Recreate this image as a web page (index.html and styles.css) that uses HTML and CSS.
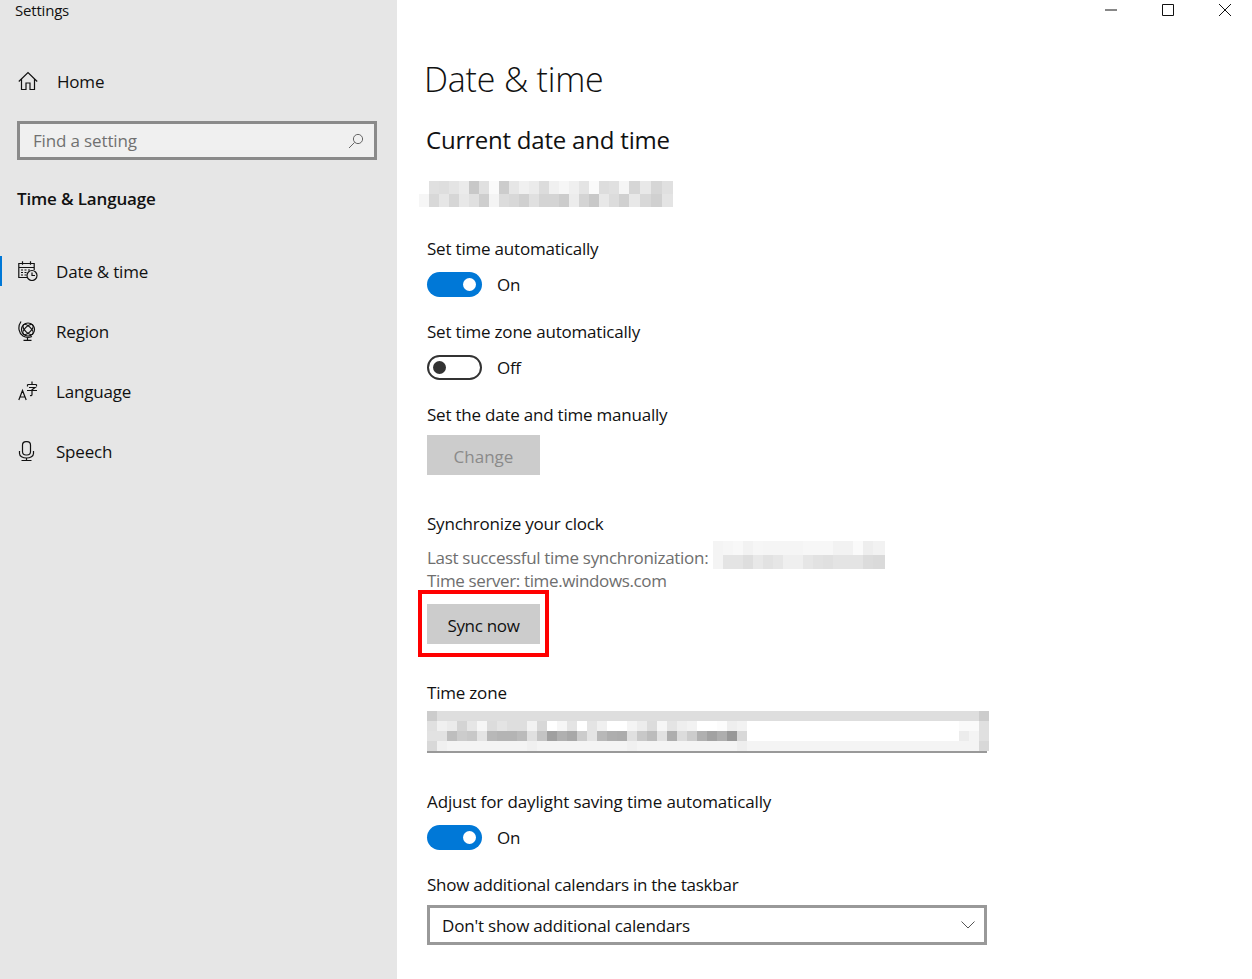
FILE: index.html
```html
<!DOCTYPE html>
<html lang="en">
<head>
<meta charset="utf-8">
<title>Settings</title>
<link rel="stylesheet" href="styles.css">
</head>
<body>
<div class="window">
  <aside class="sidebar">
    <div class="app-title">Settings</div>
    <div class="nav-row home">
      <svg class="nav-icon" viewBox="0 0 20 20"><path d="M.8 10.500 10 1.500l9.200 9M3.500 8v10.500h4.500v-6.500h4v6.500h4.500V8"/></svg>
      <span>Home</span>
    </div>
    <div class="search">
      <span>Find a setting</span>
      <svg class="search-icon" viewBox="0 0 16 16"><circle cx="10" cy="6" r="4.600"/><path d="M6.600 9.400 1 15"/></svg>
    </div>
    <div class="section-title">Time &amp; Language</div>
    <nav class="nav">
      <div class="nav-row active">
        <svg class="nav-icon" viewBox="0 0 20 20"><path d="M9 16.500H.8V2.500h15.400V9M.8 6.500h15.400M4.500.3v3.500M12.500.3v3.500"/><path d="M3 9h2M6.500 9h2M10 9h2M3 11.500h2M6.500 11.500h2M3 14h2M6.500 14h2"/><circle cx="14" cy="14.500" r="5"/><path d="M14 11.500v3h3"/></svg>
        <span>Date &amp; time</span>
      </div>
      <div class="nav-row">
        <svg class="nav-icon" viewBox="0 0 20 20"><circle cx="10" cy="8.500" r="6.500"/><ellipse cx="10" cy="8.500" rx="3" ry="6.500" transform="rotate(45 10 8.500)"/><ellipse cx="10" cy="8.500" rx="3" ry="6.500" transform="rotate(-45 10 8.500)"/><path d="M3 .5C-.8 6 1 12.500 5 15c2.500 1.500 6 1.700 9 .5M9.500 16v3M5.500 19.300h8"/></svg>
        <span>Region</span>
      </div>
      <div class="nav-row">
        <svg class="nav-icon" viewBox="0 0 20 20"><path d="M.8 19 4.500 9.500 8.200 19M2 16h5M9.500 3.500h9M9.500 3.500v2M18.500 3.500v2M14 .5v3M11 6.500h6l-3 2.200v4.800c0 1-.8 1.200-2 1M9 9.500h10"/></svg>
        <span>Language</span>
      </div>
      <div class="nav-row">
        <svg class="nav-icon" viewBox="0 0 20 20"><rect x="4.500" y=".6" width="8" height="13.400" rx="3.500"/><path d="M1.500 10v2.500a7 4.500 0 0 0 7 4.500 7 4.500 0 0 0 7-4.500V10M8.500 17v2.500M3.500 19.500h10"/></svg>
        <span>Speech</span>
      </div>
    </nav>
  </aside>

  <main class="content">
    <div class="caption-bar">
      <svg class="cap-icon" viewBox="0 0 12 12"><path d="M0 6h12"/></svg>
      <svg class="cap-icon" viewBox="0 0 12 12"><path d="M.5.500h11v11H.500z"/></svg>
      <svg class="cap-icon" viewBox="0 0 12 12"><path d="M0 0l12 12M12 0 0 12"/></svg>
    </div>
    <h1 class="page-title">Date &amp; time</h1>
    <h2 class="sub-title">Current date and time</h2>

    <svg class="mosaic date-mosaic" viewBox="0 0 254 26" shape-rendering="crispEdges">
      <g>
        <rect x="10" width="10" height="13" fill="#e0e0e0"/><rect x="20" width="10" height="13" fill="#dedede"/><rect x="30" width="10" height="13" fill="#e4e4e4"/><rect x="40" width="10" height="13" fill="#ebebeb"/><rect x="50" width="10" height="13" fill="#c8c8c8"/><rect x="60" width="10" height="13" fill="#e0e0e0"/><rect x="70" width="10" height="13" fill="#fafafa"/><rect x="80" width="10" height="13" fill="#cccccc"/><rect x="90" width="10" height="13" fill="#e6e6e6"/><rect x="100" width="10" height="13" fill="#f0f0f0"/><rect x="110" width="10" height="13" fill="#ebebeb"/><rect x="120" width="10" height="13" fill="#dcdcdc"/><rect x="130" width="10" height="13" fill="#f0f0f0"/><rect x="140" width="10" height="13" fill="#f6f6f6"/><rect x="150" width="10" height="13" fill="#efefef"/><rect x="160" width="10" height="13" fill="#e4e4e4"/><rect x="170" width="10" height="13" fill="#fafafa"/><rect x="180" width="10" height="13" fill="#dddddd"/><rect x="190" width="10" height="13" fill="#e0e0e0"/><rect x="200" width="10" height="13" fill="#f5f5f5"/><rect x="210" width="11" height="13" fill="#d6d6d6"/><rect x="221" width="11" height="13" fill="#e8e8e8"/><rect x="232" width="11" height="13" fill="#d6d6d6"/><rect x="243" width="11" height="13" fill="#e0e0e0"/>
      </g>
      <g transform="translate(0 13)">
        <rect x="0" width="10" height="13" fill="#f6f6f6"/><rect x="10" width="10" height="13" fill="#d8d8d8"/><rect x="20" width="10" height="13" fill="#e6e6e6"/><rect x="30" width="10" height="13" fill="#d6d6d6"/><rect x="40" width="10" height="13" fill="#e8e8e8"/><rect x="50" width="10" height="13" fill="#e0e0e0"/><rect x="60" width="10" height="13" fill="#cecece"/><rect x="70" width="10" height="13" fill="#f4f4f4"/><rect x="80" width="10" height="13" fill="#dcdcdc"/><rect x="90" width="10" height="13" fill="#d8d8d8"/><rect x="100" width="10" height="13" fill="#d0d0d0"/><rect x="110" width="10" height="13" fill="#e0e0e0"/><rect x="120" width="20" height="13" fill="#d4d4d4"/><rect x="140" width="10" height="13" fill="#cccccc"/><rect x="150" width="10" height="13" fill="#ececec"/><rect x="160" width="10" height="13" fill="#d4d4d4"/><rect x="170" width="10" height="13" fill="#c8c8c8"/><rect x="180" width="10" height="13" fill="#e8e8e8"/><rect x="190" width="10" height="13" fill="#dcdcdc"/><rect x="200" width="10" height="13" fill="#d0d0d0"/><rect x="210" width="11" height="13" fill="#e8e8e8"/><rect x="221" width="11" height="13" fill="#d8d8d8"/><rect x="232" width="11" height="13" fill="#d0d0d0"/><rect x="243" width="11" height="13" fill="#e4e4e4"/>
      </g>
    </svg>

    <div class="label auto-time">Set time automatically</div>
    <div class="toggle-row"><span class="toggle on"><i></i></span><span class="toggle-text">On</span></div>
    <div class="label auto-zone">Set time zone automatically</div>
    <div class="toggle-row"><span class="toggle off"><i></i></span><span class="toggle-text">Off</span></div>
    <div class="label manual">Set the date and time manually</div>
    <div class="button disabled">Change</div>

    <div class="label sync">Synchronize your clock</div>
    <div class="sync-info">
      <div class="sync-line">
        <span>Last successful time synchronization:</span>
        <svg class="mosaic sync-mosaic" viewBox="0 0 172 28" shape-rendering="crispEdges">
          <g>
            <rect width="10" height="14" fill="#f4f4f4"/><rect x="10" width="10" height="14" fill="#f6f6f6"/><rect x="20" width="10" height="14" fill="#f8f8f8"/><rect x="30" width="10" height="14" fill="#f2f2f2"/><rect x="40" width="10" height="14" fill="#f6f6f6"/><rect x="50" width="40" height="14" fill="#f5f5f5"/><rect x="90" width="30" height="14" fill="#f7f7f7"/><rect x="120" width="20" height="14" fill="#f2f2f2"/><rect x="140" width="10" height="14" fill="#fafafa"/><rect x="150" width="10" height="14" fill="#eeeeee"/><rect x="160" width="12" height="14" fill="#f2f2f2"/>
          </g>
          <g transform="translate(0 14)">
            <rect width="10" height="14" fill="#f4f4f4"/><rect x="10" width="20" height="14" fill="#e4e4e4"/><rect x="30" width="10" height="14" fill="#dedede"/><rect x="40" width="10" height="14" fill="#e8e8e8"/><rect x="50" width="10" height="14" fill="#e2e2e2"/><rect x="60" width="10" height="14" fill="#e6e6e6"/><rect x="70" width="20" height="14" fill="#efefef"/><rect x="90" width="10" height="14" fill="#e6e6e6"/><rect x="100" width="10" height="14" fill="#e2e2e2"/><rect x="110" width="10" height="14" fill="#e0e0e0"/><rect x="120" width="30" height="14" fill="#e4e4e4"/><rect x="150" width="10" height="14" fill="#dcdcdc"/><rect x="160" width="12" height="14" fill="#dadada"/>
          </g>
        </svg>
      </div>
      <div class="server-line">Time server: time.windows.com</div>
    </div>
    <div class="button sync-button">Sync now<span class="highlight"></span></div>

    <div class="label zone">Time zone</div>
    <div class="zone-box">
      <svg class="mosaic zone-mosaic" viewBox="0 0 562 40" shape-rendering="crispEdges">
        <rect width="562" height="40" fill="#ffffff"/>
        <rect width="562" height="10" fill="#dedede"/><rect width="10" height="10" fill="#cccccc"/><rect x="552" width="10" height="10" fill="#cccccc"/>
        <g transform="translate(0 10)">
          <rect width="10" height="10" fill="#e0e0e0"/><rect x="10" width="10" height="10" fill="#f0f0f0"/><rect x="20" width="10" height="10" fill="#ebebeb"/><rect x="30" width="10" height="10" fill="#d4d4d4"/><rect x="40" width="10" height="10" fill="#e6e6e6"/><rect x="50" width="10" height="10" fill="#f6f6f6"/><rect x="60" width="10" height="10" fill="#dcdcdc"/><rect x="70" width="10" height="10" fill="#e4e4e4"/><rect x="80" width="20" height="10" fill="#dedede"/><rect x="100" width="10" height="10" fill="#f2f2f2"/><rect x="110" width="10" height="10" fill="#d8d8d8"/><rect x="130" width="10" height="10" fill="#f6f6f6"/><rect x="140" width="10" height="10" fill="#e4e4e4"/><rect x="160" width="10" height="10" fill="#e4e4e4"/><rect x="170" width="10" height="10" fill="#f0f0f0"/><rect x="200" width="10" height="10" fill="#f4f4f4"/><rect x="210" width="10" height="10" fill="#ececec"/><rect x="220" width="10" height="10" fill="#dcdcdc"/><rect x="230" width="10" height="10" fill="#f6f6f6"/><rect x="240" width="10" height="10" fill="#e4e4e4"/><rect x="250" width="10" height="10" fill="#eeeeee"/><rect x="260" width="10" height="10" fill="#f2f2f2"/><rect x="290" width="10" height="10" fill="#fcfcfc"/><rect x="300" width="10" height="10" fill="#eeeeee"/><rect x="310" width="10" height="10" fill="#f2f2f2"/><rect x="532" width="20" height="10" fill="#fafafa"/><rect x="552" width="10" height="10" fill="#e0e0e0"/>
        </g>
        <g transform="translate(0 20)">
          <rect width="20" height="10" fill="#e2e2e2"/><rect x="20" width="10" height="10" fill="#bebebe"/><rect x="30" width="10" height="10" fill="#cccccc"/><rect x="40" width="10" height="10" fill="#c8c8c8"/><rect x="50" width="10" height="10" fill="#e4e4e4"/><rect x="60" width="10" height="10" fill="#b8b8b8"/><rect x="70" width="20" height="10" fill="#b4b4b4"/><rect x="90" width="10" height="10" fill="#bbbbbb"/><rect x="100" width="10" height="10" fill="#e0e0e0"/><rect x="110" width="10" height="10" fill="#c4c4c4"/><rect x="120" width="10" height="10" fill="#a0a0a0"/><rect x="130" width="10" height="10" fill="#b0b0b0"/><rect x="140" width="10" height="10" fill="#a8a8a8"/><rect x="150" width="10" height="10" fill="#cccccc"/><rect x="160" width="10" height="10" fill="#e4e4e4"/><rect x="170" width="10" height="10" fill="#b8b8b8"/><rect x="180" width="10" height="10" fill="#aeaeae"/><rect x="190" width="10" height="10" fill="#acacac"/><rect x="200" width="10" height="10" fill="#e0e0e0"/><rect x="210" width="10" height="10" fill="#c8c8c8"/><rect x="220" width="10" height="10" fill="#bcbcbc"/><rect x="230" width="10" height="10" fill="#e2e2e2"/><rect x="240" width="10" height="10" fill="#aeaeae"/><rect x="250" width="10" height="10" fill="#dcdcdc"/><rect x="260" width="10" height="10" fill="#cccccc"/><rect x="270" width="10" height="10" fill="#b0b0b0"/><rect x="280" width="10" height="10" fill="#a2a2a2"/><rect x="290" width="10" height="10" fill="#aeaeae"/><rect x="300" width="10" height="10" fill="#989898"/><rect x="310" width="10" height="10" fill="#d8d8d8"/><rect x="532" width="10" height="10" fill="#ececec"/><rect x="542" width="10" height="10" fill="#f4f4f4"/><rect x="552" width="10" height="10" fill="#e0e0e0"/>
        </g>
        <g transform="translate(0 30)">
          <rect width="562" height="10" fill="#f4f4f4"/><rect width="10" height="10" fill="#d8d8d8"/><rect x="10" width="10" height="10" fill="#f0f0f0"/><rect x="100" width="10" height="10" fill="#f0f0f0"/><rect x="200" width="10" height="10" fill="#f0f0f0"/><rect x="310" width="10" height="10" fill="#eeeeee"/><rect x="552" width="10" height="10" fill="#d8d8d8"/>
        </g>
      </svg>
    </div>

    <div class="label dst">Adjust for daylight saving time automatically</div>
    <div class="toggle-row"><span class="toggle on"><i></i></span><span class="toggle-text">On</span></div>
    <div class="label calendars">Show additional calendars in the taskbar</div>
    <div class="combo">
      <span>Don't show additional calendars</span>
      <svg class="chevron" viewBox="0 0 14 8"><path d="M.5.500 7 7 13.500.500"/></svg>
    </div>
  </main>
</div>
</body>
</html>
```
FILE: styles.css
```css
* { box-sizing: border-box; }
html, body { margin: 0; height: 100%; }
body {
  background: #fff;
  color: #111;
  font-family: "Open Sans", "Noto Sans", "Liberation Sans", sans-serif;
  font-size: 17px;
  letter-spacing: -0.2px;
  overflow: hidden;
}
.window { display: flex; width: 1252px; height: 979px; }

.sidebar { width: 397px; flex: none; background: #e6e6e6; }
.app-title { height: 22px; padding-left: 15px; font-size: 15px; line-height: 20px; }
.nav-row {
  display: flex;
  align-items: center;
  height: 60px;
  padding-left: 18px;
  gap: 18px;
}
.home { margin-top: 29px; gap: 19px; }
.nav-icon { width: 20px; height: 20px; flex: none; fill: none; stroke: #111; stroke-width: 1.2; }
.search {
  display: flex;
  align-items: center;
  justify-content: space-between;
  width: 360px;
  height: 39px;
  margin: 10px 0 0 17px;
  padding: 0 10px 0 13px;
  border: 3px solid #8a8a8a;
  background: #f0f0f0;
  color: #707070;
  letter-spacing: -0.15px;
}
.search-icon { width: 16px; height: 16px; fill: none; stroke: #666; stroke-width: 1; }
.section-title { margin: 24px 0 0 17px; height: 30px; line-height: 30px; font-weight: 600; color: #111; letter-spacing: -0.15px; }
.nav { margin-top: 27px; }
.active { position: relative; }
.active::before {
  content: "";
  position: absolute;
  left: 0;
  top: 15px;
  width: 2px;
  height: 30px;
  background: #0078d7;
}

.content { flex: 1; position: relative; padding-left: 30px; }
.caption-bar { position: absolute; top: 4px; right: 0; display: flex; gap: 45px; padding-right: 21px; }
.cap-icon { width: 12px; height: 12px; fill: none; stroke: #111; stroke-width: 1; }
.page-title { margin: 57px 0 0 -3px; height: 44px; font-size: 34px; line-height: 44px; font-weight: 300; letter-spacing: -0.2px; }
.sub-title { margin: 22px 0 0 -1px; height: 34px; font-size: 24px; line-height: 34px; font-weight: 400; letter-spacing: -0.2px; }
.mosaic { display: block; }
.date-mosaic { width: 254px; height: 26px; margin: 24px 0 0 -8px; }
.label { height: 24px; line-height: 24px; letter-spacing: -0.2px; }
.auto-time { margin-top: 30px; }
.toggle-row { display: flex; align-items: center; gap: 15px; height: 25px; margin-top: 11px; letter-spacing: -0.3px; }
.toggle-text { line-height: 27px; }
.toggle { position: relative; width: 55px; height: 25px; border-radius: 13px; flex: none; }
.toggle i { position: absolute; top: 6px; width: 13px; height: 13px; border-radius: 50%; }
.toggle.on { background: #0078d7; }
.toggle.on i { right: 6px; background: #fff; }
.toggle.off { border: 2px solid #333; }
.toggle.off i { left: 4px; top: 4px; background: #333; }
.auto-zone { margin-top: 23px; }
.manual { margin-top: 23px; letter-spacing: -0.22px; }
.button {
  position: relative;
  width: 113px;
  height: 40px;
  line-height: 43px;
  text-align: center;
  background: #ccc;
  color: #111;
  letter-spacing: -0.3px;
}
.disabled { margin-top: 8px; color: #8a8a8a; letter-spacing: 0; }
.sync { margin-top: 37px; }
.sync-info { margin-top: 5px; color: #6e6e6e; letter-spacing: -0.31px; }
.sync-line { display: flex; align-items: center; gap: 5px; height: 28px; }
.sync-line span { position: relative; top: 2px; }
.sync-mosaic { width: 172px; height: 28px; flex: none; }
.server-line { height: 18px; line-height: 18px; margin-top: 3px; letter-spacing: -0.37px; }
.sync-button { margin-top: 14px; }
.highlight {
  position: absolute;
  left: -9px;
  top: -14px;
  width: 131px;
  height: 67px;
  border: 4px solid #f00;
}
.zone { margin-top: 37px; }
.zone-box { margin-top: 6px; width: 562px; }
.zone-mosaic { width: 562px; height: 40px; }
.zone-box::after { content: ""; display: block; width: 560px; height: 2px; background: #999; }
.dst { margin-top: 37px; letter-spacing: -0.12px; }
.calendars { margin-top: 23px; letter-spacing: -0.25px; }
.combo {
  display: flex;
  align-items: center;
  justify-content: space-between;
  width: 560px;
  height: 40px;
  margin-top: 8px;
  padding: 0 9px 0 12px;
  border: 3px solid #999;
  color: #111;
}
.chevron { width: 14px; height: 8px; fill: none; stroke: #555; stroke-width: 1; }
```
